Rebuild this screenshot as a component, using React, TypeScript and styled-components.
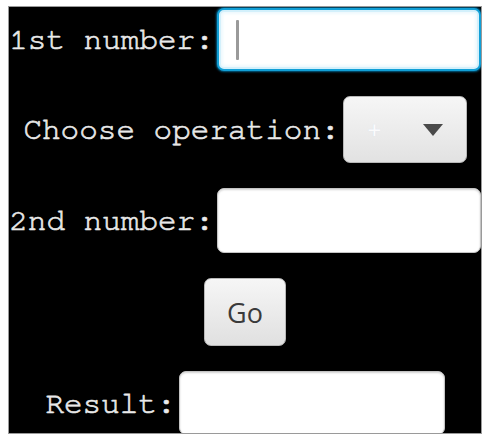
import React from "react";
import styled, { createGlobalStyle } from "styled-components";

const Global = createGlobalStyle`
  html, body { margin: 0; padding: 0; background: #ffffff; }
  body { padding: 6px 0 0 8px; }
`;

const Frame = styled.div`
  box-sizing: border-box;
  width: 474px;
  height: 428px;
  border: 1px solid #9a9a9a;
  background: #000000;
  overflow: hidden;
  display: flex;
  flex-direction: column;
  align-items: center;
  gap: 25px;
`;

const Row = styled.div<{ $top?: number }>`
  display: flex;
  align-items: center;
  gap: 3px;
  flex-shrink: 0;
  margin-top: ${(p) => p.$top ?? 0}px;
`;

const Label = styled.span`
  font-family: "Nimbus Mono PS", "Nimbus Mono L", "FreeMono", "Courier New", "Liberation Mono", monospace;
  font-size: 31px;
  color: #ececec;
  white-space: pre;
  -webkit-text-stroke: 0.7px #e6e6e6;
`;

const TextInput = styled.div<{ $focused?: boolean; $w: number; $h: number }>`
  box-sizing: border-box;
  width: ${(p) => p.$w}px;
  height: ${(p) => p.$h}px;
  border-radius: 7px;
  background: #ffffff;
  display: flex;
  align-items: center;
  padding-left: 17px;
  border: ${(p) => (p.$focused ? "2px solid #119fd6" : "1px solid #c4c4c4")};
  box-shadow: ${(p) =>
    p.$focused
      ? "0 0 2px 1px rgba(3,120,170,0.8), inset 0 0 0 2px #d3f0fb, inset 0 0 3px 4px #eef9fd"
      : "inset 0 1px 2px rgba(0,0,0,0.18)"};
`;

const Caret = styled.span`
  display: block;
  width: 3px;
  height: 40px;
  background: #9a9a9a;
  border-radius: 1px;
`;

const Combo = styled.div`
  box-sizing: border-box;
  width: 124px;
  height: 67px;
  border-radius: 7px;
  border: 1px solid #b8b8b8;
  background: linear-gradient(#f6f6f6, #e2e2e2);
  display: flex;
  align-items: center;
  justify-content: space-between;
  padding: 0 23px 0 24px;
`;

const ComboValue = styled.span`
  font-family: "Open Sans", "Liberation Sans", sans-serif;
  font-size: 24px;
  color: #fbfbfb;
  text-shadow: 0 0 1px rgba(200,220,255,0.6);
`;

const Arrow = styled.svg`
  width: 20px;
  height: 12px;
  display: block;
`;

const Button = styled.div`
  box-sizing: border-box;
  width: 82px;
  height: 68px;
  border-radius: 7px;
  border: 1px solid #b8b8b8;
  background: linear-gradient(#f6f6f6, #e0e0e0);
  display: flex;
  align-items: center;
  justify-content: center;
  font-family: "Open Sans", "Liberation Sans", sans-serif;
  font-size: 27px;
  color: #3a3a3a;
`;

export default function App() {
  return (
    <>
      <Global />
      <Frame>
        <Row $top={1}>
          <Label>1st number:</Label>
          <TextInput $focused $w={264} $h={63}>
            <Caret />
          </TextInput>
        </Row>
        <Row>
          <Label>Choose operation:</Label>
          <Combo>
            <ComboValue>+</ComboValue>
            <Arrow viewBox="0 0 20 12">
              <polygon points="0,0 20,0 10,12" fill="#4a4a4a" />
            </Arrow>
          </Combo>
        </Row>
        <Row>
          <Label>2nd number:</Label>
          <TextInput $w={264} $h={65} />
        </Row>
        <Row>
          <Button>Go</Button>
        </Row>
        <Row>
          <Label>Result:</Label>
          <TextInput $w={266} $h={64} />
        </Row>
      </Frame>
    </>
  );
}
